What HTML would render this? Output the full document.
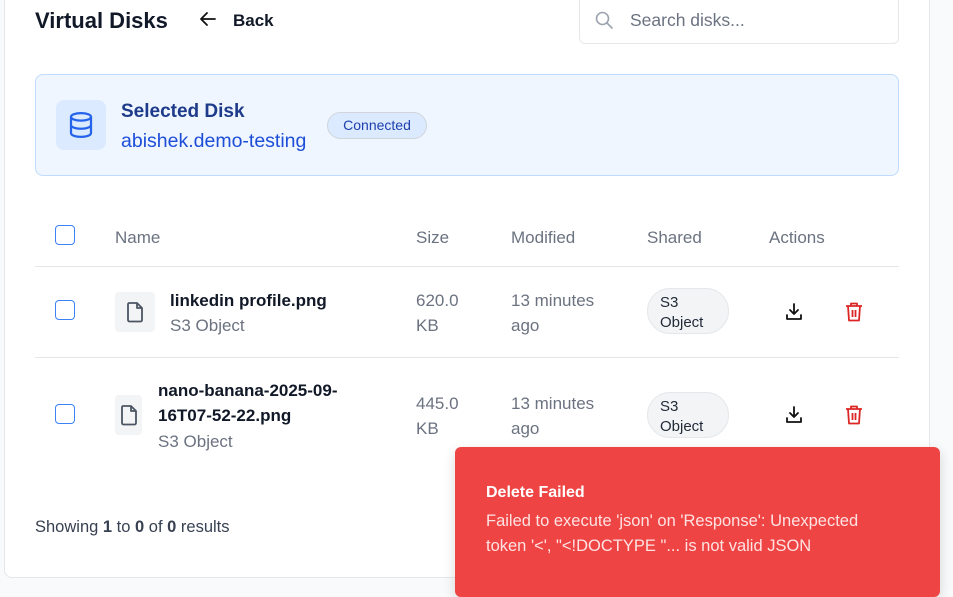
<!DOCTYPE html>
<html><head><meta charset="utf-8"><style>
*{box-sizing:border-box;margin:0;padding:0}
body{width:953px;height:586px;overflow:hidden;background:#f9fafb;font-family:"Liberation Sans",sans-serif;position:relative;color:#111827}
.card{position:absolute;left:4px;top:-10px;width:926px;height:588px;background:#fff;border:1px solid #e5e7eb;border-radius:8px}
.a{position:absolute}
.cb{position:absolute;width:20px;height:20px;border:1.5px solid #3b82f6;border-radius:4px;background:#fff}
.th{position:absolute;top:228px;font-size:17px;color:#6b7280}
.gray{color:#6b7280}
.pill{position:absolute;width:82px;height:46px;border-radius:23px;background:#f3f4f6;border:1px solid #e5e7eb;font-size:15px;color:#1f2937;padding:4px 0 0 12px;line-height:20px}
.fi{position:absolute;background:#f3f4f6;border-radius:4px;display:flex;align-items:center;justify-content:center}
.hr{position:absolute;left:35px;width:864px;height:1px;background:#e5e7eb}
</style></head><body>
<div class="card"></div>
<div class="a" style="left:35px;top:8px;font-size:22px;font-weight:bold;color:#111827">Virtual Disks</div>
<svg class="a" style="left:199px;top:11px" width="18" height="16" viewBox="0 0 18 16"><path d="M16 8H2M8 2L2 8l6 6" fill="none" stroke="#111" stroke-width="1.8" stroke-linecap="round" stroke-linejoin="round"/></svg>
<div class="a" style="left:233px;top:11px;font-size:17px;font-weight:bold">Back</div>
<div class="a" style="left:579px;top:-5px;width:320px;height:49px;border:1px solid #e5e7eb;border-radius:6px;background:#fff"></div>
<svg class="a" style="left:594px;top:10px" width="20" height="20" viewBox="0 0 20 20"><circle cx="8.5" cy="8.5" r="6" fill="none" stroke="#9ca3af" stroke-width="1.6"/><path d="M13 13l5 5" stroke="#9ca3af" stroke-width="1.6" stroke-linecap="round"/></svg>
<div class="a" style="left:630px;top:10px;font-size:17.5px;color:#6b7280">Search disks...</div>

<div class="a" style="left:35px;top:74px;width:864px;height:102px;background:#eff6ff;border:1px solid #bfdbfe;border-radius:8px"></div>
<div class="a" style="left:56px;top:100px;width:50px;height:50px;background:#dbeafe;border-radius:8px"></div>
<svg class="a" style="left:66px;top:110px" width="30" height="30" viewBox="0 0 24 24" fill="none" stroke="#2563eb" stroke-width="1.8"><ellipse cx="12" cy="5.5" rx="8" ry="3"/><path d="M4 5.5v13c0 1.7 3.6 3 8 3s8-1.3 8-3v-13M4 12c0 1.7 3.6 3 8 3s8-1.3 8-3"/></svg>
<div class="a" style="left:121px;top:101px;font-size:19px;font-weight:bold;color:#1e3a8a">Selected Disk</div>
<div class="a" style="left:121px;top:130px;font-size:19.5px;color:#1d4ed8">abishek.demo-testing</div>
<div class="a" style="left:327px;top:112px;width:100px;height:27px;background:#dbeafe;border:1px solid #d1d5db;border-radius:14px;font-size:14px;color:#1e40af;text-align:center;line-height:25px">Connected</div>

<div class="cb" style="left:55px;top:225px"></div>
<div class="th" style="left:115px">Name</div>
<div class="th" style="left:416px">Size</div>
<div class="th" style="left:511px">Modified</div>
<div class="th" style="left:647px">Shared</div>
<div class="th" style="left:769px">Actions</div>
<div class="hr" style="top:266px"></div>

<div class="cb" style="left:55px;top:300px"></div>
<div class="fi" style="left:115px;top:292px;width:40px;height:40px"><svg width="22" height="24" viewBox="0 0 22 24" fill="none" stroke="#4b5563" stroke-width="1.8" stroke-linejoin="round"><path d="M5 3h8l5 5v12a1.5 1.5 0 0 1-1.5 1.5h-11A1.5 1.5 0 0 1 4 20V4.5A1.5 1.5 0 0 1 5 3zM13 3v5h5"/></svg></div>
<div class="a" style="left:170px;top:291px;font-size:17px;font-weight:bold">linkedin profile.png</div>
<div class="a gray" style="left:170px;top:316px;font-size:17px">S3 Object</div>
<div class="a gray" style="left:416px;top:288px;font-size:17px;line-height:25px">620.0<br>KB</div>
<div class="a gray" style="left:511px;top:288px;font-size:17px;line-height:25px">13 minutes<br>ago</div>
<div class="pill" style="left:647px;top:288px">S3<br>Object</div>
<svg class="a" style="left:784px;top:302px" width="20" height="20" viewBox="0 0 20 20" fill="none" stroke="#111" stroke-width="1.8" stroke-linecap="round" stroke-linejoin="round"><path d="M10 2v10M6 8l4 4 4-4M3 13v4h14v-4"/></svg>
<svg class="a" style="left:844px;top:301px" width="20" height="22" viewBox="0 0 20 22" fill="none" stroke="#dc2626" stroke-width="1.8" stroke-linejoin="round"><path d="M2 5h16M7 5V2.5h6V5M4 5l1 14.5h10L16 5M8.5 9v7M11.5 9v7"/></svg>
<div class="hr" style="top:357px"></div>

<div class="cb" style="left:55px;top:404px"></div>
<div class="fi" style="left:115px;top:395px;width:27px;height:40px"><svg width="22" height="24" viewBox="0 0 22 24" fill="none" stroke="#4b5563" stroke-width="1.8" stroke-linejoin="round"><path d="M5 3h8l5 5v12a1.5 1.5 0 0 1-1.5 1.5h-11A1.5 1.5 0 0 1 4 20V4.5A1.5 1.5 0 0 1 5 3zM13 3v5h5"/></svg></div>
<div class="a" style="left:158px;top:378px;font-size:17px;font-weight:bold;line-height:25px">nano-banana-2025-09-<br>16T07-52-22.png</div>
<div class="a gray" style="left:158px;top:432px;font-size:17px">S3 Object</div>
<div class="a gray" style="left:416px;top:391px;font-size:17px;line-height:25px">445.0<br>KB</div>
<div class="a gray" style="left:511px;top:391px;font-size:17px;line-height:25px">13 minutes<br>ago</div>
<div class="pill" style="left:647px;top:392px">S3<br>Object</div>
<svg class="a" style="left:784px;top:405px" width="20" height="20" viewBox="0 0 20 20" fill="none" stroke="#111" stroke-width="1.8" stroke-linecap="round" stroke-linejoin="round"><path d="M10 2v10M6 8l4 4 4-4M3 13v4h14v-4"/></svg>
<svg class="a" style="left:844px;top:404px" width="20" height="22" viewBox="0 0 20 22" fill="none" stroke="#dc2626" stroke-width="1.8" stroke-linejoin="round"><path d="M2 5h16M7 5V2.5h6V5M4 5l1 14.5h10L16 5M8.5 9v7M11.5 9v7"/></svg>

<div class="a" style="left:35px;top:518px;font-size:16.5px;color:#374151">Showing <b>1</b> to <b>0</b> of <b>0</b> results</div>

<div class="a" style="left:455px;top:447px;width:485px;height:150px;background:#ef4444;border-radius:6px;box-shadow:0 4px 12px rgba(0,0,0,.15)"></div>
<div class="a" style="left:486px;top:484px;font-size:16px;font-weight:bold;color:#fff">Delete Failed</div>
<div class="a" style="left:486px;top:509px;font-size:16.5px;color:#fee2e2;line-height:25px">Failed to execute 'json' on 'Response': Unexpected<br>token '&lt;', "&lt;!DOCTYPE "... is not valid JSON</div>
</body></html>
